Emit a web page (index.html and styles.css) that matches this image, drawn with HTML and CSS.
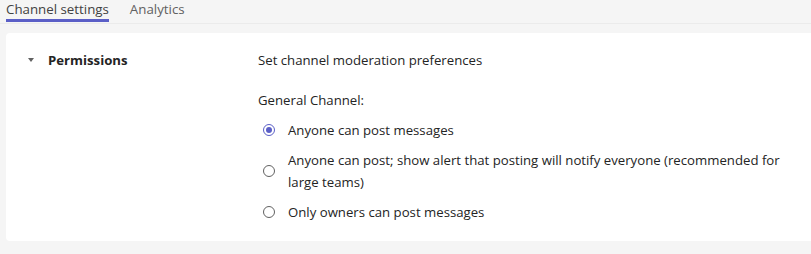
FILE: index.html
```html
<html>
  <head>
    <link rel="stylesheet" href="styles.css">
  </head>
  <body>
    <div class="tabs">
      <div class="tab active">Channel settings</div>
      <div class="tab">Analytics</div>
    </div>
    <div class="card">
      <div class="section-head">
        <span class="caret"></span>
        <span class="section-title">Permissions</span>
      </div>
      <div class="section-body">
        <p class="desc">Set channel moderation preferences</p>
        <p class="group-label">General Channel:</p>
        <label class="option">
          <span class="radio checked"></span>
          <span class="option-text">Anyone can post messages</span>
        </label>
        <label class="option">
          <span class="radio"></span>
          <span class="option-text">Anyone can post; show alert that posting will notify everyone (recommended for large teams)</span>
        </label>
        <label class="option">
          <span class="radio"></span>
          <span class="option-text">Only owners can post messages</span>
        </label>
      </div>
    </div>
  </body>
</html>
```

FILE: styles.css
```css
body {
    margin: 0;
    background: #f5f5f5;
    font-family: "Open Sans", "Noto Sans", sans-serif;
    font-size: 13.2px;
    color: #242424;
}
.tabs {
    display: flex;
    gap: 21px;
    padding: 0 6px;
    height: 23px;
    border-bottom: 1px solid #ebebeb;
}
.tab {
    color: #616161;
    font-size: 13.3px;
    line-height: 19px;
}
.tab.active {
    color: #424242;
    border-bottom: 3px solid #5b5fc7;
    height: 19px;
}
.card {
    margin: 9px 0 0 6px;
    background: #fff;
    border-radius: 4px 0 0 4px;
    display: flex;
    padding: 17px 0 10px 0;
    height: 181px;
}
.section-head {
    width: 252px;
    display: flex;
    align-items: center;
    height: 20px;
}
.caret {
    width: 0;
    height: 0;
    border-left: 3px solid transparent;
    border-right: 3px solid transparent;
    border-top: 4px solid #616161;
    margin: 0 14px 0 22px;
}
.section-title {
    font-weight: bold;
}
.section-body {
    flex: 1;
    padding-right: 10px;
}
.desc {
    margin: 0;
    line-height: 20px;
}
.group-label {
    margin: 20px 0 0 0;
    padding-bottom: 1px;
    line-height: 20px;
}
.option {
    display: flex;
    margin-top: 8px;
    line-height: 22px;
}
.radio {
    flex: none;
    align-self: center;
    width: 10px;
    height: 10px;
    border: 1px solid #616161;
    border-radius: 50%;
    margin: 0 13px 0 5px;
    position: relative;
}
.radio.checked {
    border-color: #5b5fc7;
}
.radio.checked::after {
    content: "";
    position: absolute;
    left: 2px;
    top: 2px;
    width: 6px;
    height: 6px;
    border-radius: 50%;
    background: #5b5fc7;
}
```
